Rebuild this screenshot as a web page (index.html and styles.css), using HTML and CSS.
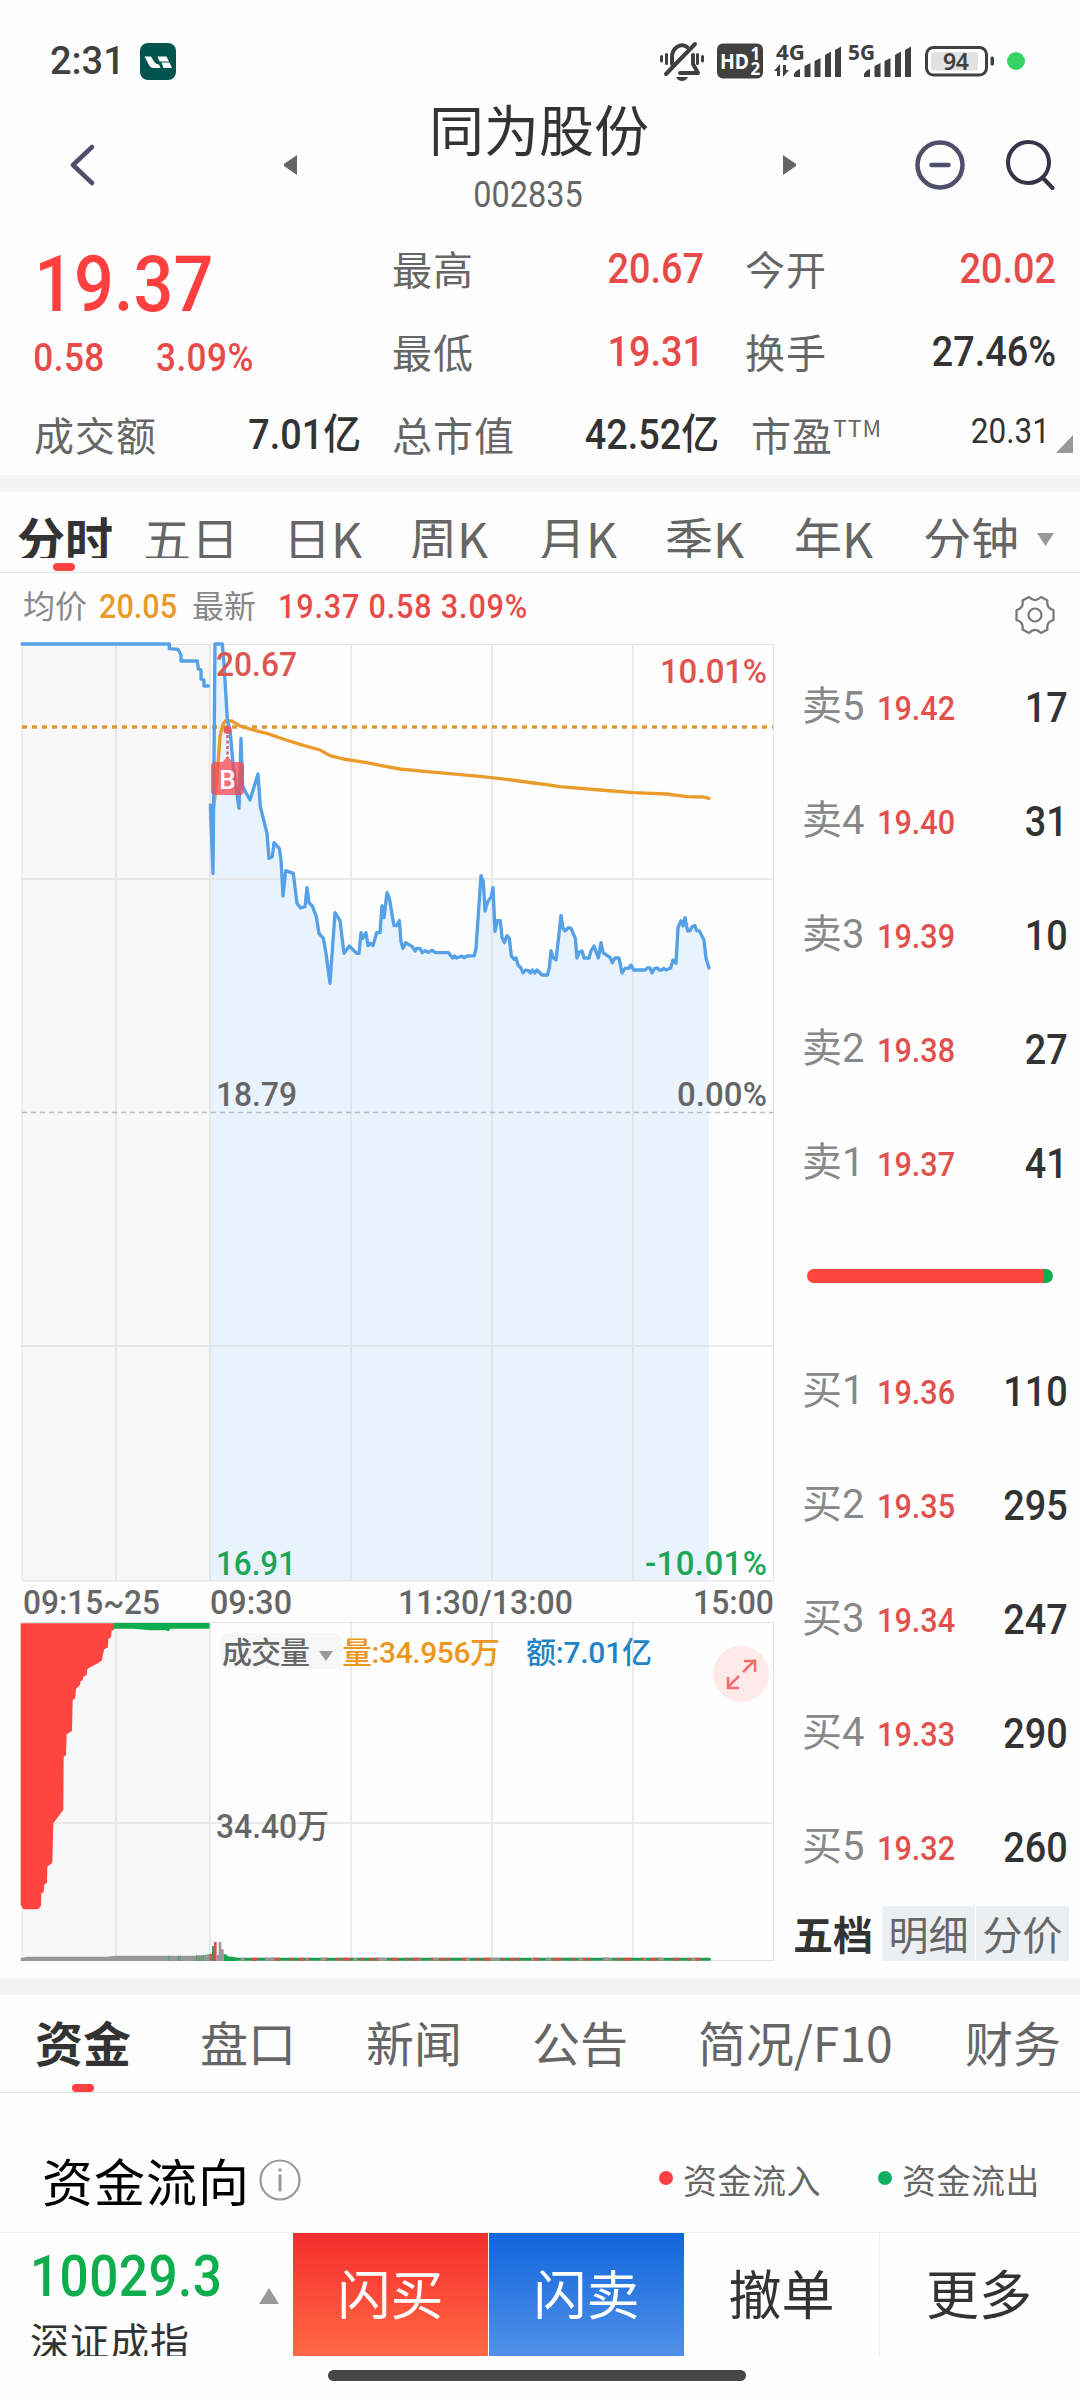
FILE: index.html
```html
<!DOCTYPE html>
<html lang="zh-CN">
<head>
    <meta charset="UTF-8">
    <meta name="viewport" content="width=device-width, initial-scale=1.0">
    <title>同为股份 002835</title>
    <link rel="stylesheet" href="styles.css">
</head>
<body>
    <div class="statusbar">
        <span class="clock">2:31</span>
        <svg class="app-icon" width="36" height="38" viewBox="0 0 36 38">
            <rect width="36" height="37" rx="8" fill="#00564e"/>
            <path d="M4.500 13.500h6.500l3 5q2 3 5 3l1.500 3.500h-7q-3 0-4.500-3z" fill="#fff"/>
            <path d="M17.500 13.500h9l2.500 5h-8.500q-1 0-1.500-1zM21.500 19.500h8l2.500 5.500h-8.500z" fill="#fff"/>
        </svg>
        <svg class="status-icons" width="370" height="44" viewBox="658 40 370 44">
            <g fill="none" stroke="#404040" stroke-width="4" stroke-linecap="round">
                <path d="M672 66V60a10 12 0 0 1 15-11M693 57v9l5 9h-18" stroke-linejoin="round"/>
                <path d="M666 76L695 46"/>
                <path d="M661.500 58.500v4.500M666.500 56.500v9M697.500 56.500v9M702.500 58.500v4.500" stroke-width="3"/>
            </g>
            <path d="M676 79h12q-2 4-6 4t-6-4z" fill="#404040"/>
            <rect x="717" y="45.500" width="46" height="35" rx="6" fill="#404040"/>
            <text class="st inv" x="720" y="71" font-size="21" textLength="29" lengthAdjust="spacingAndGlyphs">HD</text>
            <text class="st inv" x="750.500" y="61.500" font-size="17">1</text>
            <text class="st inv" x="750.500" y="77" font-size="17">2</text>
            <text class="st" x="776" y="61.500" font-size="20.500" textLength="29" lengthAdjust="spacingAndGlyphs">4G</text>
            <text class="st" x="848" y="61.500" font-size="20.500" textLength="27" lengthAdjust="spacingAndGlyphs">5G</text>
            <g fill="#404040">
                <path d="M774 73l6-7v12h-3v-5zM783 67h3v5h3l-6 7z"/>
                <path id="bars" d="M794 79v-3q2-4 6-5v8zM804.500 79v-11l6-3v14zM814.500 79v-16l6-3v19zM825 79v-22l6-3.500v25.500zM835 79v-27l6-3.500v30.500z"/>
                <use href="#bars" x="70"/>
            </g>
            <rect x="926.500" y="49.500" width="60" height="27.500" rx="7" fill="none" stroke="#404040" stroke-width="3"/>
            <rect x="931" y="54" width="47" height="18.500" rx="3" fill="#e2e2e2"/>
            <rect x="990.500" y="58.500" width="3.500" height="9" rx="1.500" fill="#404040"/>
            <text class="st semi" x="943" y="72" font-size="23" textLength="26">94</text>
            <circle cx="1016" cy="63" r="9" fill="#38d267"/>
        </svg>
    </div>

    <header class="header">
        <svg width="26" height="44" viewBox="0 0 26 44"><path d="M23 4L4 22l19 18" class="stroke-nav"/></svg>
        <svg width="14" height="20" viewBox="0 0 14 20"><path d="M13 0v20L0 11V9z" fill="#666"/></svg>
        <div class="title">
            <h1>同为股份</h1>
            <p class="num">002835</p>
        </div>
        <svg width="14" height="20" viewBox="0 0 14 20"><path d="M0 0v20L13 11V9z" fill="#666"/></svg>
        <svg width="50" height="50" viewBox="0 0 50 50"><circle cx="25" cy="25" r="22.500" class="stroke-nav"/><path d="M16.500 25h17" class="stroke-nav"/></svg>
        <svg width="50" height="50" viewBox="0 0 50 50"><g stroke="#35354a" stroke-width="4" fill="none" stroke-linecap="round"><circle cx="23.500" cy="22.500" r="20.500"/><path d="M38 38l9.500 10"/></g></svg>
    </header>

    <section class="quote">
        <div class="last">
            <div class="price num">19.37</div>
            <div class="change num"><span>0.58</span><span>3.09%</span></div>
        </div>
        <dl>
            <dt>最高</dt><dd class="num up">20.67</dd>
            <dt class="c3">今开</dt><dd class="num up">20.02</dd>
            <dt>最低</dt><dd class="num up">19.31</dd>
            <dt class="c3">换手</dt><dd class="num">27.46%</dd>
        </dl>
        <div class="row3">
            <span class="label">成交额</span><span class="num v1">7.01亿</span>
            <span class="label l2">总市值</span><span class="num v2">42.52亿</span>
            <span class="label l3">市盈<sup>TTM</sup></span><span class="num v3">20.31</span>
            <svg class="corner" width="18" height="18" viewBox="0 0 18 18"><path d="M17 0v18H0z" fill="#999"/></svg>
        </div>
    </section>

    <div class="band"></div>

    <nav class="periods">
        <span class="active">分时</span><span>五日</span><span>日K</span><span>周K</span><span>月K</span><span>季K</span><span>年K</span><span>分钟</span>
        <svg width="17" height="14" viewBox="0 0 17 14"><path d="M0 0h17L8.500 13z" fill="#999"/></svg>
    </nav>

    <div class="info">
        <span class="gray">均价</span><span class="num orange">20.05</span><span class="gray">最新</span><span class="num up latest">19.37 0.58 3.09%</span>
        <svg class="gear" width="42" height="42" viewBox="-21 -21 42 42">
            <g fill="none" stroke="#777" stroke-width="2.200">
                <circle r="6.500"/>
                <path stroke-linejoin="round" d="M-6-18Q0-12 6-18L12.500-14.500Q11-7 18.500-5V5Q11 7 12.500 14.500L6 18Q0 12-6 18L-12.500 14.500Q-11 7-18.500 5V-5Q-11-7-12.500-14.500Z"/>
            </g>
        </svg>
    </div>

    <main class="market">
        <svg class="chart" width="790" height="1338" viewBox="0 640 790 1338">
            <!-- call auction background -->
            <path d="M22 644h188v937H22zM22 1622h188v338H22z" fill="#f8f8f8"/>

            <!-- price area, line coordinates are in thirds of a pixel -->
            <g transform="translate(0 620) scale(.333333)">
                <path fill="#e8f3fe" d="M631 2883L631 555 639 760 645 72 667 72 672 130 682 300 690 330 700 440 717 565 723 355 728 500 750 540 774 462 781 560 801 640 807 715 817 710 822 668 838 685 843 720 849 828 857 752 880 760 891 850 902 864 915 860 921 803 927 848 937 858 949 890 957 940 970 955 978 1000 990 1090 1005 878 1020 902 1032 1000 1048 978 1070 1000 1077 1000 1083 938 1088 955 1098 938 1104 977 1119 977 1130 938 1140 938 1146 857 1152 893 1161 818 1168 835 1182 917 1190 917 1198 902 1203 965 1209 985 1217 968 1237 980 1260 985 1285 997 1345 998 1358 1014 1423 1007 1428 985 1443 767 1450 785 1455 873 1463 845 1473 832 1479 803 1485 934 1492 902 1501 902 1506 952 1513 968 1521 947 1528 955 1534 1008 1554 1035 1569 1059 1611 1050 1626 1065 1642 1065 1648 1044 1653 992 1668 1020 1675 960 1683 886 1689 925 1695 933 1713 925 1726 955 1731 1014 1746 993 1752 1014 1767 1014 1782 978 1795 1014 1803 968 1809 998 1830 1012 1837 1028 1845 1014 1857 1014 1866 1059 1887 1044 1901 1050 1998 1050 2012 1044 2019 1020 2028 1030 2034 923 2043 902 2055 893 2063 933 2085 917 2098 933 2112 960 2118 1014 2127 1044V2883z"/>
            </g>

            <g fill="none" stroke="#d8d8d8" stroke-opacity=".55" stroke-width="2">
                <path d="M116 644v937M210 644v937M351 644v937M492 644v937M633 644v937M22 879h751M22 1346h751"/>
                <path d="M116 1622v338M210 1622v338M351 1622v338M492 1622v338M633 1622v338M22 1823h751"/>
            </g>
            <path d="M22 644.500h751.500v936.500H22zM22 1622.500h751.500v338H22z" fill="none" stroke="#e2e2e2"/>
            <path d="M22 1112.500h751" stroke="#bbb" stroke-width="1.500" stroke-dasharray="5 4" fill="none"/>
            <path d="M22 727h751" stroke="#e0982f" stroke-width="3.500" stroke-dasharray="5 5" fill="none"/>

            <g transform="translate(0 620) scale(.333333)" fill="none" stroke-linejoin="round" stroke-linecap="round">
                <polyline stroke="#eb9a2c" stroke-width="10" points="641,560 645,530 655,420 660,350 668,315 676,303 695,303 720,318 760,330 800,340 850,357 900,373 960,390 990,407 1030,417 1100,428 1140,436 1200,447 1280,455 1340,460 1440,469 1520,478 1600,489 1640,494 1680,500 1800,510 1900,518 2000,522 2060,530 2110,531 2127,535"/>
                <polyline stroke="#54a1e8" stroke-width="10" points="66,72 508,72 508,86 534,88 543,105 543,123 592,123 595,147 603,150 603,177 612,180 612,198 625,198"/>
                <polyline stroke="#54a1e8" stroke-width="10" points="631,555 639,760 645,72 667,72 672,130 682,300 690,330 700,440 717,565 723,355 728,500 750,540 774,462 781,560 801,640 807,715 817,710 822,668 838,685 843,720 849,828 857,752 880,760 891,850 902,864 915,860 921,803 927,848 937,858 949,890 957,940 970,955 978,1000 990,1090 1005,878 1020,902 1032,1000 1048,978 1070,1000 1077,1000 1083,938 1088,955 1098,938 1104,977 1112,970 1119,977 1130,938 1140,938 1146,857 1152,893 1161,818 1168,835 1182,917 1190,917 1198,902 1203,965 1209,985 1217,968 1237,980 1245,993 1250,985 1260,985 1266,998 1275,992 1285,997 1295,991 1308,998 1345,998 1358,1014 1364,1008 1370,1014 1385,1008 1392,1013 1402,1008 1423,1007 1428,985 1443,767 1450,785 1455,873 1463,845 1473,832 1479,803 1485,934 1492,902 1501,902 1506,952 1513,968 1521,947 1528,955 1534,1008 1542,1018 1548,1014 1554,1035 1563,1044 1569,1059 1577,1050 1585,1052 1591,1059 1597,1050 1604,1059 1611,1050 1626,1065 1642,1065 1648,1044 1653,992 1660,1014 1668,1020 1675,960 1683,886 1689,925 1695,933 1705,923 1713,925 1726,955 1731,1014 1737,997 1746,993 1752,1014 1767,1014 1773,993 1782,978 1795,1014 1803,968 1809,998 1830,1012 1837,1028 1845,1014 1857,1014 1866,1059 1875,1045 1887,1044 1893,1035 1901,1050 1935,1050 1942,1044 1950,1044 1956,1059 1963,1046 1972,1044 1978,1050 1985,1050 1991,1045 1998,1050 2012,1044 2019,1020 2028,1030 2034,923 2043,902 2049,918 2055,893 2063,933 2070,932 2077,920 2085,917 2090,932 2098,933 2112,960 2118,1014 2127,1044"/>
            </g>

            <!-- buy marker -->
            <circle cx="227.500" cy="730" r="4" fill="#ee5a62"/>
            <path d="M227.500 735v23" stroke="#d5607d" stroke-width="2.500" stroke-dasharray="3 2.500"/>
            <path d="M215 762h7.500l5-6 5 6h7.500q4 0 4 4v25q0 4-4 4h-25q-4 0-4-4v-25q0-4 4-4z" fill="#f8474f" fill-opacity=".75"/>
            <text class="num" x="227.500" y="788.500" font-size="26" text-anchor="middle" fill="#fff">B</text>

            <g class="num" font-size="33">
                <text x="216" y="676" class="f-up" textLength="81" lengthAdjust="spacingAndGlyphs">20.67</text>
                <text x="660" y="683" class="f-up" textLength="107">10.01%</text>
                <text x="216" y="1106" class="f-gray" textLength="81" lengthAdjust="spacingAndGlyphs">18.79</text>
                <text x="677" y="1106" class="f-gray" textLength="90">0.00%</text>
                <text x="216" y="1575" class="f-down" textLength="80" lengthAdjust="spacingAndGlyphs">16.91</text>
                <text x="645" y="1575" class="f-down" textLength="122">-10.01%</text>
            </g>
            <g class="num f-gray" font-size="34">
                <text x="23" y="1614" textLength="137" lengthAdjust="spacingAndGlyphs">09:15~25</text>
                <text x="210" y="1614" textLength="82" lengthAdjust="spacingAndGlyphs">09:30</text>
                <text x="398" y="1614" textLength="175" lengthAdjust="spacingAndGlyphs">11:30/13:00</text>
                <text x="693" y="1614" textLength="81" lengthAdjust="spacingAndGlyphs">15:00</text>
            </g>

            <!-- volume -->
            <g transform="translate(0 1540) scale(.333333)">
                <path fill="#ff4540" d="M62 250H344L342 270 335 272 333 292 325 297 324 322 313 328 310 340 305 362 293 370 268 383 262 388 260 405 250 410 248 421 242 424 240 435 228 447 226 475 218 480 216 573 200 583 198 645 191 650 190 810 160 850 157 968 142 980 141 1030 133 1033 131 1057 124 1060 123 1097 115 1108H70L62 1095z"/>
                <path fill="#0eae4e" d="M341 249H625q4 0 4 4v8q0 5-4 5H512l-6 8-10-3H450l-50-5H341z"/>
                <path fill="#999" d="M62 1263v-9l18-4h240l25-3h255l30-5v21z"/>
                <path stroke="#55a06c" stroke-width="4" d="M507 1247v16M535 1247v16M541 1247v16M590 1245v18M597 1245v18M604 1245v18M611 1245v18"/>
                <path stroke="#dc4f47" stroke-width="8" d="M633 1241v22M646 1206v57"/>
                <path stroke="#2d9d58" stroke-width="6" d="M639 1218v45"/>
                <path stroke="#999" stroke-width="8" d="M660 1206v57M667 1228v35M654 1245v18"/>
                <path fill="#18a350" d="M671 1263v-20l8 0 4 6 20 2 8 2v10z"/>
                <path stroke="#209a54" stroke-width="9" d="M700 1258H2132"/>
                <path stroke="#d95049" stroke-width="9" stroke-dasharray="18 24 8 12 24 31 9 17 14 6 10 38" d="M754 1258H2100"/>
                <path stroke="#999" stroke-width="9" stroke-dasharray="12 61 28 95 6 38 16 82" d="M722 1258H2090"/>
            </g>
            <rect x="221" y="1633" width="120" height="36" rx="6" fill="#f7f7f7"/>
            <path d="M319 1651h14l-7 10z" fill="#999"/>
            <g class="num" font-size="30">
                <text x="222" y="1663" class="f-gray" textLength="88">成交量</text>
                <text x="342" y="1663" fill="#ed971e" textLength="158">量:34.956万</text>
                <text x="526" y="1663" fill="#1f84c5" textLength="126">额:7.01亿</text>
                <text x="216" y="1838" class="f-gray" font-size="33" textLength="113" lengthAdjust="spacingAndGlyphs">34.40万</text>
            </g>
            <circle cx="741" cy="1674" r="28" fill="#ffe9e9"/>
            <path d="M743 1672l12-12M744 1661h11v11M739 1676l-11 11M728 1677v11h11" fill="none" stroke="#f36e6e" stroke-width="2.500"/>
        </svg>

        <aside class="book">
            <div class="level"><span>卖5</span><b class="num">19.42</b><i class="num">17</i></div>
            <div class="level"><span>卖4</span><b class="num">19.40</b><i class="num">31</i></div>
            <div class="level"><span>卖3</span><b class="num">19.39</b><i class="num">10</i></div>
            <div class="level"><span>卖2</span><b class="num">19.38</b><i class="num">27</i></div>
            <div class="level"><span>卖1</span><b class="num">19.37</b><i class="num">41</i></div>
            <div class="ratio"><div></div></div>
            <div class="level"><span>买1</span><b class="num">19.36</b><i class="num">110</i></div>
            <div class="level"><span>买2</span><b class="num">19.35</b><i class="num">295</i></div>
            <div class="level"><span>买3</span><b class="num">19.34</b><i class="num">247</i></div>
            <div class="level"><span>买4</span><b class="num">19.33</b><i class="num">290</i></div>
            <div class="level"><span>买5</span><b class="num">19.32</b><i class="num">260</i></div>
            <div class="book-tabs"><span class="active">五档</span><span>明细</span><span>分价</span></div>
        </aside>
    </main>

    <div class="band"></div>

    <nav class="sections">
        <span class="active">资金</span><span>盘口</span><span>新闻</span><span>公告</span><span>简况/F10</span><span>财务</span>
    </nav>

    <section class="flow">
        <h2>资金流向</h2>
        <svg width="42" height="42" viewBox="0 0 42 42"><circle cx="21" cy="21" r="19.500" fill="none" stroke="#999" stroke-width="2.200"/><path d="M21 15.500v17M21 9.500v3" stroke="#999" stroke-width="3"/></svg>
        <span class="legend in">资金流入</span>
        <span class="legend out">资金流出</span>
    </section>

    <footer class="trade">
        <div class="index">
            <div class="num">10029.3</div>
            <div class="name">深证成指</div>
        </div>
        <svg width="20" height="16" viewBox="0 0 20 16"><path d="M10 0l10 16H0z" fill="#999"/></svg>
        <button class="buy">闪买</button>
        <button class="sell">闪卖</button>
        <button>撤单</button>
        <button class="more">更多</button>
    </footer>
    <div class="home"></div>
</body>
</html>
```
FILE: styles.css
```css
:root {
    --up: #e84a48;
    --down: #0eae4e;
    --text: #333;
    --gray: #666;
}

* {
    box-sizing: border-box;
}

body {
    margin: 0;
    width: 1080px;
    height: 2400px;
    overflow: hidden;
    background: #fefefe;
    color: var(--text);
    font-family: "Noto Sans CJK SC", sans-serif;
    font-size: 40px;
    line-height: 1;
}

svg {
    display: block;
    flex: none;
}

h1, h2, p, dl, dd {
    margin: 0;
    font-weight: 400;
}

.num {
    font-family: Roboto, "Noto Sans CJK SC", sans-serif;
    font-weight: 500;
}

/* narrow the digits outside the chart */
div.num, dd.num, span.num, p.num, b.num, i.num {
    transform: scaleX(.9);
    transform-origin: left;
}

.up {
    color: var(--up);
}

.f-up { fill: #dd5550; }
.f-down { fill: #1ca655; }
.f-gray { fill: #666; }

/* status bar */
.statusbar {
    display: flex;
    height: 96px;
    padding: 38px 52px 0 50px;
}

.clock {
    width: 90px;
    padding-top: 4px;
    font-family: Roboto, sans-serif;
    font-weight: 500;
    font-size: 38px;
    color: #404040;
}

.app-icon {
    margin-top: 5px;
}

.status-icons {
    margin-left: auto;
}

.st {
    font-family: "Noto Sans", sans-serif;
    font-weight: 700;
    fill: #404040;
}

.st.inv {
    fill: #fff;
}

.st.semi {
    font-weight: 600;
}

/* header */
.header {
    display: grid;
    grid-template-columns: 215px 145px 354px 132px 90px 60px;
    align-items: center;
    height: 148px;
    padding: 0 0 11px 69px;
}

.header .title {
    width: 216px;
    padding-bottom: 17px;
    white-space: nowrap;
    text-align: center;
}

.stroke-nav {
    fill: none;
    stroke: #4f4f6b;
    stroke-width: 4.5;
    stroke-linecap: round;
    stroke-linejoin: round;
}

.title h1 {
    font-size: 55px;
}

.header .title p {
    margin: 22px 0 0 -18px;
    font-size: 36px;
    font-weight: 400;
    color: var(--gray);
    transform-origin: center;
}

/* quote */
.quote {
    display: grid;
    grid-template-columns: 392px 1fr;
    grid-template-rows: 170px 61px;
    height: 231px;
}

.price {
    padding: 2px 0 0 38px;
    font-size: 78px;
    color: #ff403f;
}

.change {
    display: flex;
    gap: 57px;
    padding: 15px 0 0 37px;
    font-size: 39px;
    letter-spacing: .5px;
    color: var(--up);
}

.quote dl {
    display: grid;
    grid-template-columns: 120px 192px 120px 232px;
    grid-auto-rows: 83px;
    padding-top: 4px;
}

.quote dt, .label {
    letter-spacing: 1px;
    white-space: nowrap;
    color: var(--gray);
}

.quote dt.c3 {
    padding-left: 41px;
}

.quote dl .num {
    height: 43px;
    text-align: right;
    font-size: 42px;
    transform-origin: right;
}

.row3 {
    grid-column: 1 / 3;
    display: grid;
    grid-template-columns: 125px 202px 161px 197px 160px 171px 24px;
    padding-left: 34px;
}

.label.l2 {
    padding-left: 31px;
}

.label.l3 {
    padding-left: 32px;
}

.row3 .num {
    font-size: 42px;
    text-align: right;
    white-space: nowrap;
    transform-origin: right;
}

.row3 .v3 {
    font-size: 35px;
    font-weight: 400;
}

.row3 sup {
    font-size: 23px;
    line-height: 0;
}

.corner {
    margin: 21px 0 0 6px;
}

.band {
    height: 17px;
    background: #f4f4f4;
}

/* period tabs */
.periods {
    position: relative;
    display: grid;
    grid-template-columns: 126px 140px 126px 129px 127px 129px 129px 114px 20px;
    height: 81px;
    padding-left: 17px;
    border-bottom: 1px solid #e4e4e4;
    font-size: 48px;
    color: var(--gray);
}

.periods span {
    height: 66px;
    padding-top: 21px;
    overflow: hidden;
}

.periods svg {
    margin-top: 41px;
}

.active {
    color: var(--text);
    font-weight: 700;
}

.sections .active {
    position: relative;
}

.periods::after, .sections .active::after {
    content: "";
    position: absolute;
    left: 53px;
    bottom: 1px;
    width: 22px;
    height: 8px;
    border-radius: 4px;
    background: #fa4242;
}

/* averages */
.info {
    display: flex;
    align-items: flex-start;
    height: 67px;
    padding: 15px 24px 0 23px;
    font-size: 32px;
}

.gray {
    width: 76px;
    color: #888;
}

.info .num {
    width: 93px;
    padding-top: 1px;
    font-size: 34px;
}

.info .gray + .latest {
    width: 300px;
    margin-left: 10px;
    letter-spacing: .9px;
    white-space: nowrap;
}

.orange {
    color: #e99a2b;
}

.gear {
    margin: 6px 0 0 auto;
}

/* order book */
.market {
    display: flex;
    height: 1338px;
}

.book {
    width: 290px;
    padding-top: 11px;
}

.level {
    display: flex;
    align-items: center;
    height: 114px;
    padding: 0 12px 0 12px;
}

.level span {
    width: 75px;
    padding-bottom: 2px;
    font-family: Roboto, "Noto Sans CJK SC", sans-serif;
    font-size: 40px;
    color: #888;
}

.level b {
    font-size: 34px;
    color: #e2504c;
}

.level .num + .num {
    margin-left: auto;
    font-size: 42px;
    font-style: normal;
    transform-origin: right;
}

.ratio {
    display: flex;
    align-items: center;
    height: 114px;
    padding: 0 27px 4px 17px;
}

.ratio div {
    width: 100%;
    height: 14px;
    border-radius: 7px;
    background: linear-gradient(90deg, #ff4540 237px, #0eae4e 237px);
}

.book-tabs {
    display: grid;
    grid-template-columns: 88px 93px 93px;
    column-gap: 1px;
    height: 56px;
    padding: 1px 0 0 3px;
}

.book-tabs span {
    padding-top: 7px;
    background: #ebeff2;
    text-align: center;
    color: var(--gray);
}

.book-tabs .active {
    background: none;
    color: var(--text);
    text-align: left;
}

/* section tabs */
.sections {
    display: grid;
    grid-template-columns: 165px 166px 166px 166px 267px 110px;
    height: 98px;
    padding: 22px 0 0 35px;
    border-bottom: 1px solid #e4e4e4;
    font-size: 48px;
    white-space: nowrap;
    color: var(--gray);
}

.sections .active::after {
    left: 37px;
    bottom: 0;
}

/* capital flow */
.flow {
    display: flex;
    align-items: center;
    height: 139px;
    padding: 35px 40px 0 42px;
}

.flow h2 {
    width: 217px;
    font-size: 51px;
    letter-spacing: 1px;
    color: #000;
}

.legend {
    display: flex;
    align-items: center;
    gap: 10px;
    font-size: 34px;
    letter-spacing: .5px;
    color: var(--gray);
}

.legend::before {
    content: "";
    width: 14px;
    height: 14px;
    margin-bottom: 5px;
    border-radius: 50%;
    background: #fa4040;
}

.legend.in {
    margin-left: auto;
}

.legend.out {
    margin-left: 57px;
}

.legend.out::before {
    background: #10b060;
}

/* trade bar */
.trade {
    display: grid;
    grid-template-columns: 229px 34px 195px 196px 195px 199px;
    height: 124px;
    padding-left: 30px;
    border-top: 1px solid #eee;
}

.trade .index {
    height: 123px;
    overflow: hidden;
}

.index .num {
    padding-top: 15px;
    font-size: 57px;
    letter-spacing: .5px;
    color: var(--down);
}

.index .name {
    margin-top: 15px;
    font-size: 39px;
    letter-spacing: 1px;
    white-space: nowrap;
}

.trade svg {
    margin-top: 55px;
}

.trade button {
    height: 123px;
    padding: 0 0 4px;
    border: 0;
    background: none;
    color: var(--text);
    font: inherit;
    font-size: 53px;
}

.trade .buy {
    background: linear-gradient(#f52e2e, #ff6844);
    color: #fff;
}

.trade .sell {
    margin-left: 1px;
    background: linear-gradient(#1066dc, #5290e8);
    color: #fff;
}

.trade .more {
    border-left: 1px solid #eee;
}

.home {
    width: 418px;
    height: 11px;
    margin: 14px 0 0 328px;
    border-radius: 6px;
    background: #474747;
}
```
